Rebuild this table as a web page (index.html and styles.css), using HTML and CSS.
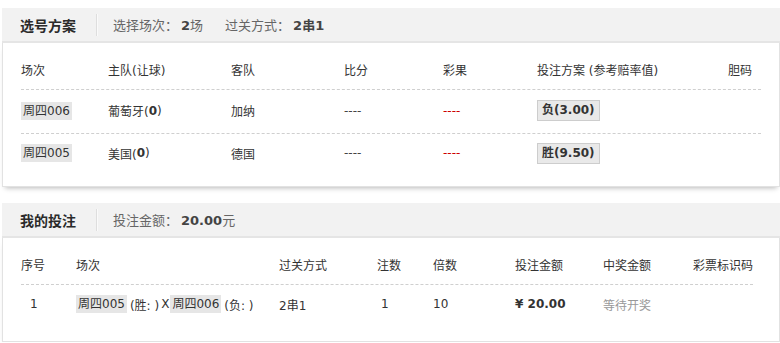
FILE: index.html
```html
<!DOCTYPE html>
<html lang="zh-CN">
<head>
<meta charset="utf-8">
<title>投注详情</title>
<link rel="stylesheet" href="styles.css">
</head>
<body>
<div class="page">
  <section class="panel">
    <div class="panel-head">
      <h2 class="panel-title">选号方案</h2>
      <span class="sep"></span>
      <div class="info">
        <span class="info-item">选择场次：<b>2</b>场</span>
        <span class="info-item">过关方式：<b>2串1</b></span>
      </div>
    </div>
    <div class="panel-body">
      <div class="grid plan head">
        <span>场次</span><span>主队(让球)</span><span>客队</span><span>比分</span><span>彩果</span><span>投注方案 (参考赔率值)</span><span>胆码</span>
      </div>
      <div class="grid plan row">
        <span><em class="tag">周四006</em></span>
        <span>葡萄牙(<b>0</b>)</span>
        <span>加纳</span>
        <span class="dash">----</span>
        <span class="dash red">----</span>
        <span><strong class="odds">负(3.00)</strong></span>
        <span></span>
      </div>
      <div class="grid plan row last">
        <span><em class="tag">周四005</em></span>
        <span>美国(<b>0</b>)</span>
        <span>德国</span>
        <span class="dash">----</span>
        <span class="dash red">----</span>
        <span><strong class="odds">胜(9.50)</strong></span>
        <span></span>
      </div>
    </div>
  </section>

  <section class="panel">
    <div class="panel-head">
      <h2 class="panel-title">我的投注</h2>
      <span class="sep"></span>
      <div class="info">
        <span class="info-item">投注金额：<b>20.00</b>元</span>
      </div>
    </div>
    <div class="panel-body">
      <div class="grid bet head">
        <span>序号</span><span>场次</span><span>过关方式</span><span>注数</span><span>倍数</span><span>投注金额</span><span>中奖金额</span><span>彩票标识码</span>
      </div>
      <div class="grid bet row last">
        <span class="idx">1</span>
        <span class="matches"><em class="tag">周四005</em><span class="pick">(胜: )</span><span class="x">X</span><em class="tag">周四006</em><span class="pick">(负: )</span></span>
        <span>2串1</span>
        <span class="num">1</span>
        <span>10</span>
        <span class="money">¥ 20.00</span>
        <span class="wait">等待开奖</span>
        <span></span>
      </div>
    </div>
  </section>
</div>
</body>
</html>
```

FILE: styles.css
```css
* { box-sizing: border-box; }

html, body {
  margin: 0;
  padding: 0;
  background: #fff;
}

body {
  font-family: "DejaVu Sans", "Noto Sans CJK SC", sans-serif;
  font-size: 12px;
  color: #333;
}

.page {
  padding: 8px 0 0 2px;
  display: flex;
  flex-direction: column;
  gap: 16px;
}

.panel {
  width: 778px;
}

.panel-head {
  height: 35px;
  background: #f2f2f2;
  border-bottom: 2px solid #e5e5e5;
  display: flex;
  align-items: center;
  padding-left: 18px;
}

.panel-title {
  margin: 0;
  font-size: 14px;
  font-weight: bold;
  color: #2b2b2b;
  font-family: "Noto Sans CJK SC", sans-serif;
  line-height: 20px;
  width: 58px;
}

.sep {
  width: 1px;
  height: 22px;
  background: #dedede;
  box-shadow: 1px 0 0 #fafafa;
  margin: 0 16px 0 18px;
}

.info {
  display: flex;
  gap: 22px;
  font-size: 13px;
  color: #666;
  font-family: "Noto Sans CJK SC", sans-serif;
}

.info b {
  font-family: "DejaVu Sans", "Noto Sans CJK SC", sans-serif;
  font-size: 13px;
  color: #444;
  font-weight: bold;
  margin-left: 3px;
}

.panel-body {
  border: 1px solid #e2e2e2;
  border-top: 0;
  padding: 0 18px 8px;
  box-shadow: 0 4px 5px -3px rgba(0, 0, 0, 0.28);
  background: #fff;
}

.grid {
  display: grid;
  align-items: center;
}

.grid.plan {
  grid-template-columns: 87px 123px 113px 99px 94px 191px 1fr;
}

.grid.bet {
  grid-template-columns: 55px 203px 98px 56px 82px 88px 90px 1fr;
  margin-right: 8px;
}

.grid.head {
  padding: 20px 0 9px;
  line-height: 17px;
  border-bottom: 1px dashed #cfcfcf;
  color: #333;
}

.grid.row {
  padding: 10px 0 12px;
  min-height: 44px;
  border-bottom: 1px dashed #cfcfcf;
  color: #333;
}

.grid.plan.row > span { min-height: 21px; display: flex; align-items: center; }

.grid.row.last { border-bottom: 0; }

.grid.plan.row.last { padding: 8px 0 14px; }

.grid.bet.row { padding: 10px 0 20px; }
.grid.bet.row > span { min-height: 18px; display: flex; align-items: center; }

.grid b { font-weight: bold; }

.tag {
  font-style: normal;
  background: #e6e6e6;
  padding: 1px 2px;
  line-height: 16px;
  display: inline-block;
}

.dash { color: #444; }
.dash.red { color: #cc0000; }

.odds {
  display: inline-block;
  background: #e9e9e9;
  border: 1px solid #cdcdcd;
  padding: 0 4px;
  line-height: 19px;
  font-weight: bold;
  color: #333;
}

.idx { padding-left: 9px; }

.pick { margin: 0 2px 0 3px; }
.x { margin-right: 1px; }

.num { padding-left: 4px; }

.money { font-weight: bold; color: #333; }

.wait { color: #999; }
```
